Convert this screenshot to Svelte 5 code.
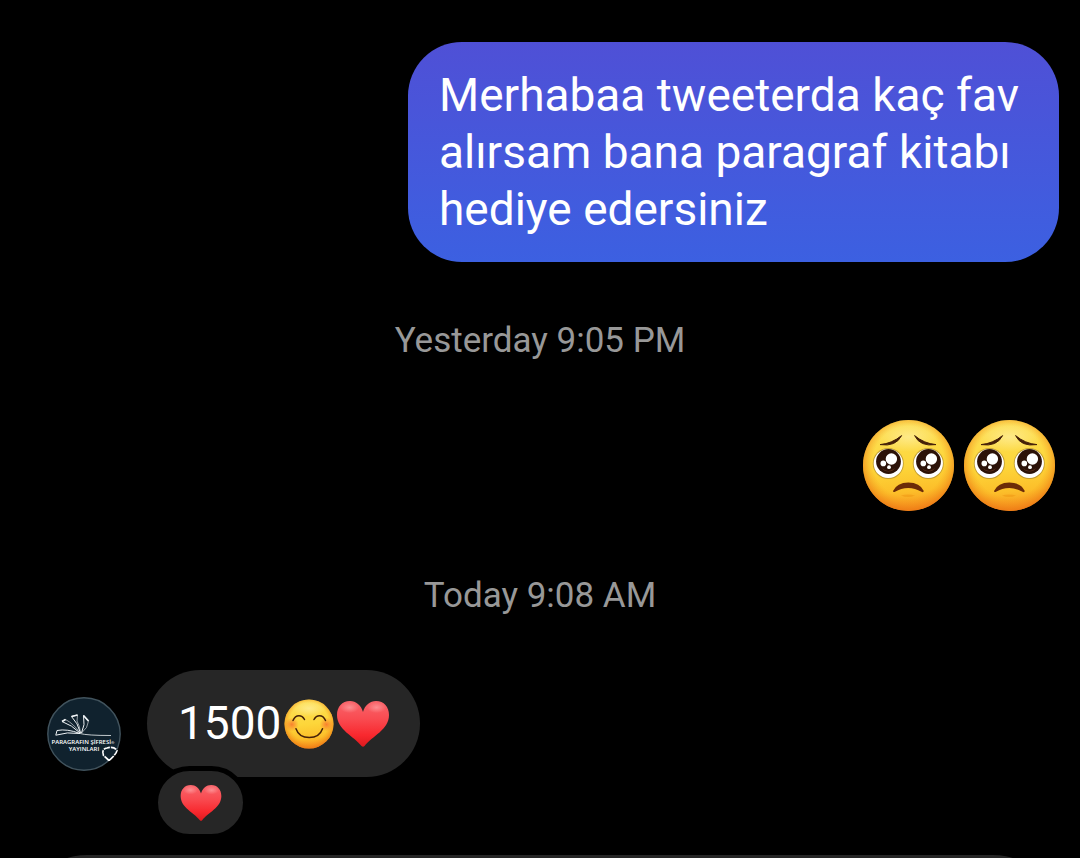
<script>
    const messages = [
        { id: 1, sent: true, text: 'Merhabaa tweeterda kaç fav alırsam bana paragraf kitabı hediye edersiniz' },
        { id: 2, stamp: 'Yesterday 9:05 PM' },
        { id: 3, sent: true, faces: ['pleading', 'pleading'] },
        { id: 4, stamp: 'Today 9:08 AM' },
        { id: 5, text: '1500', faces: ['smile', 'heart'], reaction: 'heart' }
    ];
</script>

{#snippet emoji(name)}
    {#if name === 'pleading'}
        <svg class="emoji pleading" viewBox="0 0 92 92" role="img" aria-label="Pleading face">
            <circle cx="45.5" cy="45.5" r="45.5" fill="url(#face)" />
            <circle cx="45.5" cy="45.5" r="45.5" fill="url(#edge)" />
            <ellipse cx="45.5" cy="17" rx="31" ry="15" fill="url(#shine)" />
            <path d="M17 24.6 Q29 23.5 38.6 15.6 Q33 27 17 24.6Z" class="brow" />
            <path d="M73 24.6 Q61 23.5 51.6 15.6 Q57 27 73 24.6Z" class="brow" />
            {#each [0, 40] as dx}
                <g transform="translate({dx} 0)">
                    <circle cx="25.3" cy="43.5" r="15.5" fill="#a8862c" opacity="0.7" />
                    <circle cx="25.3" cy="43.5" r="14.6" fill="#fff" />
                    <circle cx="25.5" cy="41.5" r="12.4" fill="#2c1208" />
                    <path d="M19 48 Q25 54 32 48 Q30 51.5 25.5 51.5 Q21 51.5 19 48" fill="#5a2e1c" />
                    <circle cx="28.4" cy="39" r="5.7" fill="#fff" />
                    <circle cx="20.3" cy="43.4" r="2.8" fill="#fff" />
                    <circle cx="26" cy="47.2" r="1.9" fill="#fff" />
                </g>
            {/each}
            <path d="M30 71 Q34 62.5 45.3 62.5 Q57 62.5 60.8 71 Q60.5 72.8 58.5 71.8 Q52 68 45.3 68 Q38 68 32 71.8 Q30 72.5 30 71Z" fill="#6c2b08" />
            <path d="M38 75.5 Q45 73.5 52 75.5 Q45 78.5 38 75.5Z" fill="#f09a16" opacity="0.6" />
        </svg>
    {:else if name === 'smile'}
        <svg class="emoji smile" viewBox="0 0 50 50" role="img" aria-label="Smiling face">
            <circle cx="25" cy="25" r="24.5" fill="url(#face)" />
            <circle cx="25" cy="25" r="24.5" fill="url(#edge)" />
            <ellipse cx="25" cy="9.5" rx="17" ry="8" fill="url(#shine)" />
            <circle cx="7.8" cy="25.5" r="7" fill="url(#blush)" />
            <circle cx="42.5" cy="25.5" r="7" fill="url(#blush)" />
            <path d="M9 21.5 Q11 16.7 15 16.7 Q18.5 16.7 20.5 20.5" class="line" />
            <path d="M30 20.5 Q32 16.7 35.5 16.7 Q39.5 16.7 41.5 21.5" class="line" />
            <path d="M12 29.7 Q15 38.5 25.2 38.5 Q35.5 38.5 38.5 29.7" class="line" />
        </svg>
    {:else}
        <svg class="emoji heart" viewBox="0 0 52 46" role="img" aria-label="Red heart">
            <path d="M26 11 C24 4 19 0 13 0 C5 0 0 6 0 14 C0 29 17 35 24.5 45 Q26 46.6 27.5 45 C35 35 52 29 52 14 C52 6 47 0 39 0 C33 0 28 4 26 11Z" fill="url(#heart)" />
            <ellipse cx="12.5" cy="6.5" rx="9.5" ry="5.5" fill="url(#gloss)" />
            <ellipse cx="39.5" cy="6.5" rx="9.5" ry="5.5" fill="url(#gloss)" />
        </svg>
    {/if}
{/snippet}

<svg class="defs" aria-hidden="true">
    <defs>
        <linearGradient id="face" x1="0.45" y1="0" x2="0.55" y2="1">
            <stop offset="0" stop-color="#fde058" />
            <stop offset="0.5" stop-color="#fdd63a" />
            <stop offset="0.78" stop-color="#fcbf2a" />
            <stop offset="1" stop-color="#f78f1e" />
        </linearGradient>
        <radialGradient id="edge" cx="0.5" cy="0.46" r="0.54">
            <stop offset="0.72" stop-color="#f59a1c" stop-opacity="0" />
            <stop offset="1" stop-color="#ec7614" stop-opacity="0.8" />
        </radialGradient>
        <radialGradient id="shine">
            <stop offset="0" stop-color="#fff3b0" stop-opacity="0.6" />
            <stop offset="1" stop-color="#fff3b0" stop-opacity="0" />
        </radialGradient>
        <radialGradient id="blush">
            <stop offset="0" stop-color="#f8722c" stop-opacity="0.85" />
            <stop offset="1" stop-color="#f8722c" stop-opacity="0" />
        </radialGradient>
        <linearGradient id="heart" x1="0" y1="0" x2="0" y2="1">
            <stop offset="0" stop-color="#f9666c" />
            <stop offset="0.4" stop-color="#f94a50" />
            <stop offset="0.75" stop-color="#f8282e" />
            <stop offset="1" stop-color="#dc1a1e" />
        </linearGradient>
        <radialGradient id="gloss">
            <stop offset="0" stop-color="#ffa3a5" stop-opacity="0.7" />
            <stop offset="1" stop-color="#ffa3a5" stop-opacity="0" />
        </radialGradient>
    </defs>
</svg>

<main>
    {#each messages as message (message.id)}
        {#if message.stamp}
            <time class="stamp">{message.stamp}</time>
        {:else if message.sent}
            <div class="row sent">
                {#if message.text}
                    <p class="bubble">{message.text}</p>
                {:else}
                    <div class="big-emoji">
                        {#each message.faces as face}
                            {@render emoji(face)}
                        {/each}
                    </div>
                {/if}
            </div>
        {:else}
            <div class="row received">
                <svg class="avatar" viewBox="0 0 74 74" role="img" aria-label="Paragrafın Şifresi Yayınları">
                    <circle cx="37" cy="37" r="36.2" fill="#10222e" stroke="#41535d" stroke-width="1.4" />
                    <g fill="none" stroke="#eef2f4" stroke-width="1" stroke-linejoin="round">
                        <path d="M33 36.5 Q20 31.5 10 33.5 L8.8 38.2 Q20 34.5 33 36.5" />
                        <path d="M33 36 Q25 28 15 24.5 L18.5 22.5" />
                        <path d="M18.5 22.5 Q27 27 33 36" stroke-width="0.6" />
                        <path d="M33.5 36 Q31 26 24.5 19.5 L30.5 18" />
                        <path d="M30.5 18 L30 24 Q33 29 33.5 36" stroke-width="0.6" />
                        <path d="M34.5 36 Q38.5 28 36.5 18.5 L41.5 24" />
                        <path d="M41.5 24 Q41 31 34.5 36" stroke-width="0.6" />
                        <path d="M15 24.5 L18.5 22.5 M24.5 19.5 L30.5 18 M36.5 18.5 L41.5 24" stroke-width="1.8" />
                        <path d="M33 36.5 Q40 38.5 64 38.5" stroke-width="0.8" />
                    </g>
                    <text x="36" y="47" class="logo">PARAGRAFIN ŞİFRESİ<tspan class="mark">®</tspan></text>
                    <text x="37" y="54" class="logo">YAYINLARI</text>
                    <path d="M62 63.5 L56.5 58.5 Q54 52 60 51 Q67 49 70 53.5 Q69.5 57 62 63.5Z" fill="#10222e" stroke="#fff" stroke-width="1.7" stroke-dasharray="6 1" />
                </svg>
                <div class="stack">
                    <p class="bubble">
                        <span>{message.text}</span>
                        {#each message.faces as face}
                            {@render emoji(face)}
                        {/each}
                    </p>
                    <button class="reaction" aria-label="Reactions">
                        {@render emoji(message.reaction)}
                    </button>
                </div>
            </div>
        {/if}
    {/each}

    <footer class="composer"></footer>
</main>

<style>
    :global(body) {
        background: #000;
    }

    main {
        box-sizing: border-box;
        height: 100vh;
        overflow: hidden;
        display: flex;
        flex-direction: column;
        padding: 42px 21px 0;
        background: #000;
        color: #fff;
        font-family: Roboto, "Liberation Sans", sans-serif;
    }

    .defs {
        position: absolute;
        width: 0;
        height: 0;
    }

    .row {
        display: flex;
        flex-shrink: 0;
    }

    .sent {
        justify-content: flex-end;
    }

    .bubble {
        margin: 0;
        padding: 25px 31px;
        border-radius: 54px;
        font-size: 46px;
        line-height: 57px;
    }

    .sent .bubble {
        box-sizing: border-box;
        max-width: 651px;
        padding-bottom: 24px;
        background: linear-gradient(#4f50d6, #3c60e1);
    }

    .stamp {
        flex-shrink: 0;
        margin: 58px 0 54px;
        text-align: center;
        color: #989898;
        font-size: 35px;
        line-height: 41px;
    }

    .big-emoji {
        display: flex;
        gap: 9px;
        padding: 5px 3px;
    }

    .emoji {
        display: block;
        flex-shrink: 0;
    }

    .pleading {
        width: 92px;
        height: 92px;
    }

    .smile {
        width: 50px;
        height: 50px;
    }

    .heart {
        width: 52px;
        height: 46px;
    }

    .brow {
        fill: #452008;
        stroke: #452008;
        stroke-width: 1;
        stroke-linejoin: round;
    }

    .line {
        fill: none;
        stroke: #452008;
        stroke-width: 1.5;
        stroke-linecap: round;
    }

    .received {
        align-items: flex-start;
        gap: 26px;
        padding-left: 26px;
    }

    .avatar {
        width: 74px;
        height: 74px;
        margin-top: 27px;
    }

    .logo {
        fill: #fff;
        font-family: "Open Sans", sans-serif;
        font-size: 6px;
        font-weight: 600;
        text-anchor: middle;
    }

    .mark {
        font-size: 4px;
    }

    .stack {
        display: flex;
        flex-direction: column;
        align-items: flex-start;
    }

    .received .bubble {
        display: flex;
        align-items: center;
        gap: 3px;
        background: #262626;
    }

    .reaction {
        display: flex;
        align-items: center;
        justify-content: center;
        box-sizing: content-box;
        width: 85px;
        height: 63px;
        margin: -11px 0 0 6px;
        padding: 0;
        border: 5px solid #000;
        border-radius: 37px;
        background: #262626;
    }

    .reaction .heart {
        width: 42px;
        height: 36px;
    }

    .composer {
        flex-shrink: 0;
        height: 132px;
        margin-top: 16px;
        border-radius: 66px;
        background: #262626;
    }
</style>
